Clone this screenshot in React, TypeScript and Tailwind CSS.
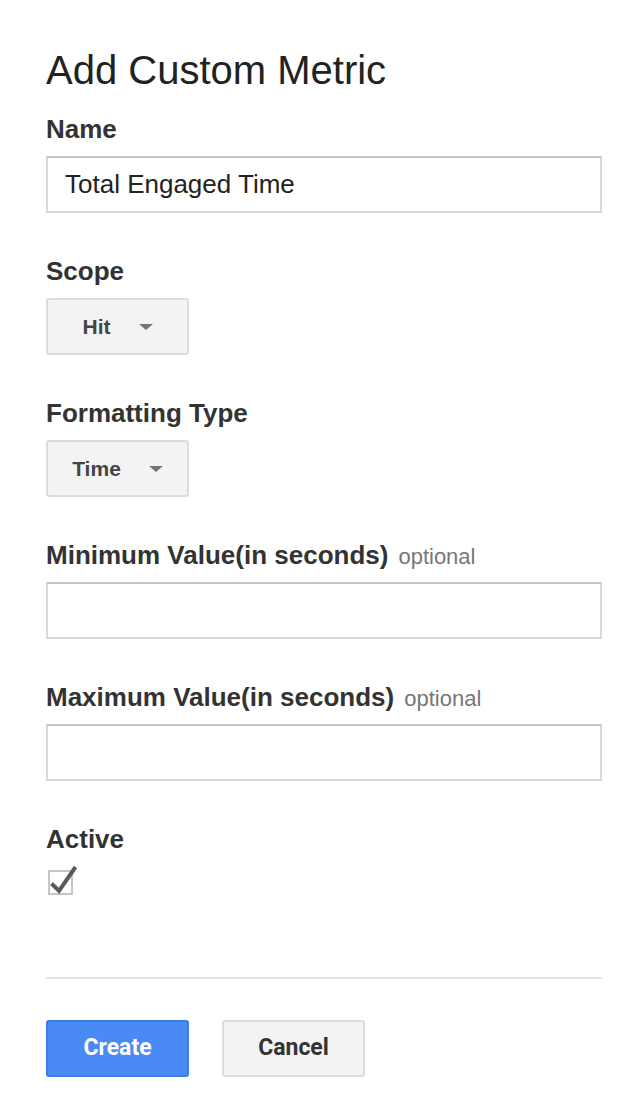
import React from 'react';

const Caret: React.FC = () => (
  <svg width="14" height="6" viewBox="0 0 14 6" className="block">
    <path d="M0 0 L14 0 L7 6 Z" fill="#757575" />
  </svg>
);

interface SelectProps {
  value: string;
}

const SelectButton: React.FC<SelectProps> = ({ value }) => (
  <button className="mt-[12px] flex h-[57px] w-[143px] items-center justify-center gap-[28px] rounded-[3px] border-2 border-[#dcdcdc] bg-[#f3f3f3] text-[21px] font-bold text-[#444]">
    <span>{value}</span>
    <Caret />
  </button>
);

const Label: React.FC<{ text: string; optional?: boolean; className?: string }> = ({ text, optional, className }) => (
  <div className={`h-[30px] text-[26px] leading-[30px] font-bold text-[#333] whitespace-nowrap ${className ?? ''}`}>
    {text}
    {optional && <span className="ml-[10px] text-[22px] font-normal text-[#777]">optional</span>}
  </div>
);

const TextInput: React.FC<{ value?: string; className?: string }> = ({ value = '', className }) => (
  <div
    className={`flex h-[57px] w-full items-center border-2 border-[#d9d9d9] border-t-[#c4c4c4] bg-white pl-[17px] text-[26px] text-[#222] ${className ?? ''}`}
  >
    {value}
  </div>
);

export default function App() {
  return (
    <div className="min-h-screen bg-white" style={{ fontFamily: '"Liberation Sans", Arial, sans-serif' }}>
      <div className="w-[602px] pl-[46px]">
        <h1 className="pt-[46px] text-[40px] leading-[48px] font-normal text-[#222]">Add Custom Metric</h1>

        <Label text="Name" className="mt-[20px]" />
        <TextInput value="Total Engaged Time" className="mt-[12px]" />

        <Label text="Scope" className="mt-[43px]" />
        <SelectButton value="Hit" />

        <Label text="Formatting Type" className="mt-[43px]" />
        <SelectButton value="Time" />

        <Label text="Minimum Value(in seconds)" optional className="mt-[43px]" />
        <TextInput className="mt-[12px]" />

        <Label text="Maximum Value(in seconds)" optional className="mt-[43px]" />
        <TextInput className="mt-[12px]" />

        <Label text="Active" className="mt-[43px]" />
        <div className="mt-[16px] ml-[2px] h-[25px] w-[25px] border-2 border-[#c6c6c6] bg-white">
          <svg width="21" height="21" viewBox="0 0 21 21" className="overflow-visible">
            <path d="M1.5 11.5 L9 19 L25.5 -5" fill="none" stroke="#5a5a5a" strokeWidth="4" strokeLinejoin="miter" />
          </svg>
        </div>

        <div className="mt-[82px] h-[2px] w-full bg-[#e3e3e3]" />

        <div className="mt-[41px] flex gap-[33px]" style={{ fontFamily: 'Roboto, "Liberation Sans", sans-serif' }}>
          <button className="h-[57px] w-[143px] rounded-[3px] border-2 border-[#3b7ce8] bg-[#4a8af4] text-[23px] font-bold text-white">
            Create
          </button>
          <button className="h-[57px] w-[143px] rounded-[3px] border-2 border-[#dcdcdc] bg-[#f3f3f3] text-[23px] font-bold text-[#333]">
            Cancel
          </button>
        </div>
      </div>
    </div>
  );
}
